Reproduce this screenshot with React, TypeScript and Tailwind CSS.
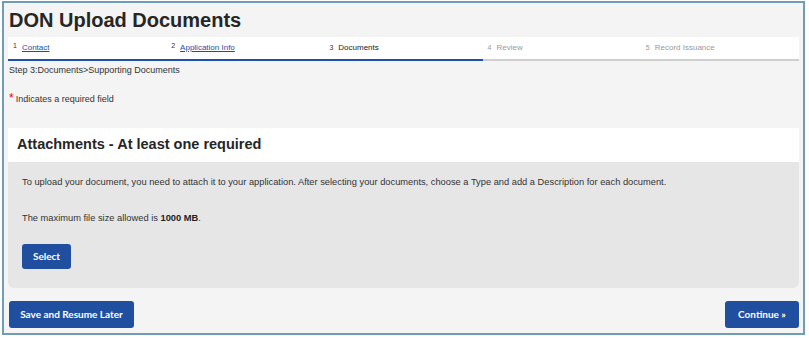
import React from "react";

const steps = [
  { n: 1, label: "Contact", state: "done" },
  { n: 2, label: "Application Info", state: "done" },
  { n: 3, label: "Documents", state: "current" },
  { n: 4, label: "Review", state: "todo" },
  { n: 5, label: "Record Issuance", state: "todo" },
];

export default function App() {
  return (
    <div className="w-[809px] h-[338px] bg-white pt-px pl-[2px] pr-[4px] pb-[3px] font-['Liberation_Sans',Arial,sans-serif]">
      <div className="h-full border-2 border-[#6f9db5] bg-[#f4f4f4] px-[4px] flex flex-col">
        {/* page title */}
        <h1 className="h-[34px] pt-[3px] pl-[1px] text-[20px] font-bold leading-[28px] text-[#262626]">DON Upload Documents</h1>

        {/* stepper */}
        <div className="h-[24px] bg-white flex">
          {steps.map((s) => (
            <div
              key={s.n}
              className={`flex-1 flex items-center pl-[5px] border-b-2 text-[8px] ${
                s.state === "todo" ? "border-[#cfcfcf]" : "border-[#1c4fb0]"
              }`}
            >
              <span className={`text-[7px] mr-[5px] ${s.state === "todo" ? "text-[#999]" : "text-[#333]"} ${s.state === "done" ? "-mt-[4px]" : ""}`}>
                {s.n}
              </span>
              {s.state === "done" ? (
                <a className="text-[#1a4dae] underline">{s.label}</a>
              ) : (
                <span className={s.state === "todo" ? "text-[#9a9a9a]" : "text-[#222]"}>{s.label}</span>
              )}
            </div>
          ))}
        </div>

        <div className="pt-[3px] pl-px text-[9px] text-[#333] leading-[12px]">
          Step 3:Documents&gt;Supporting Documents
        </div>
        <div className="pt-[16px] pl-px text-[9px] text-[#333] leading-[12px]">
          <span className="text-[#e00] text-[12px] mr-[2px]">*</span>Indicates a required field
        </div>

        {/* attachments panel */}
        <div className="mt-[23px] rounded-b-[6px] overflow-hidden">
          <div className="h-[34px] bg-white flex items-center pl-[9px]">
            <h2 className="text-[14.5px] font-bold text-[#262626]">Attachments - At least one required</h2>
          </div>
          <div className="h-[126px] bg-[#e6e6e6] pl-[14px] pt-[14px] text-[9.3px] text-[#333]">
            <p className="leading-[12px]">
              To upload your document, you need to attach it to your application. After selecting your documents, choose a Type and add a Description for each document.
            </p>
            <p className="leading-[12px] mt-[24px]">
              The maximum file size allowed is <b className="text-[#222]">1000 MB</b>.
            </p>
            <button className="mt-[20px] w-[49px] h-[25px] rounded-[3px] bg-[#1f4f9e] text-white text-[10px] font-bold font-['Lato',sans-serif]">
              Select
            </button>
          </div>
        </div>

        {/* footer buttons */}
        <div className="mt-[13px] flex justify-between pl-px">
          <button className="w-[125px] h-[27px] rounded-[3px] bg-[#1f4f9e] text-white text-[10px] font-bold font-['Lato',sans-serif]">
            Save and Resume Later
          </button>
          <button className="w-[74px] h-[27px] rounded-[3px] bg-[#1f4f9e] text-white text-[10px] font-bold font-['Lato',sans-serif]">
            Continue »
          </button>
        </div>
      </div>
    </div>
  );
}
